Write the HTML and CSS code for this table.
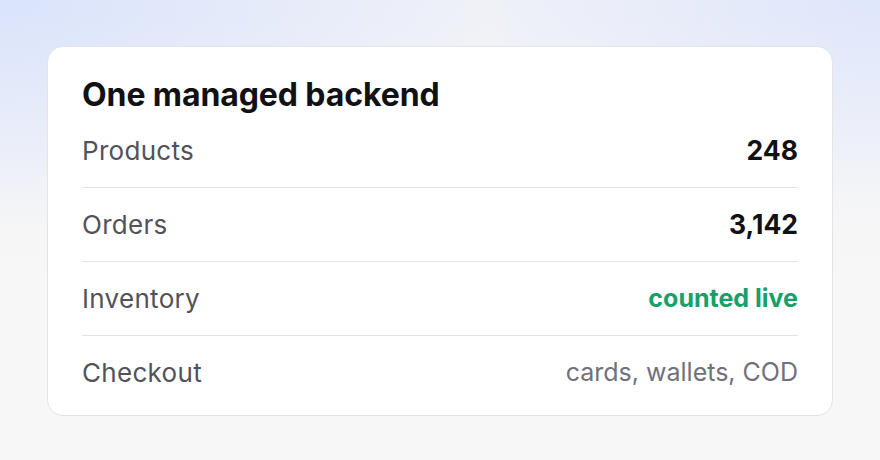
FILE: index.html
```html
<!DOCTYPE html>
<html lang="en">
<head>
<meta charset="utf-8">
<title>One managed backend</title>
<link rel="stylesheet" href="styles.css">
</head>
<body>
<main class="stage">
  <section class="card">
    <h2 class="card-title">One managed backend</h2>
    <ul class="stats">
      <li class="stat"><span class="stat-label">Products</span><span class="stat-value stat-num">248</span></li>
      <li class="stat"><span class="stat-label">Orders</span><span class="stat-value stat-num">3,142</span></li>
      <li class="stat"><span class="stat-label">Inventory</span><span class="stat-value stat-live">counted live</span></li>
      <li class="stat"><span class="stat-label">Checkout</span><span class="stat-value stat-muted">cards, wallets, COD</span></li>
    </ul>
  </section>
</main>
</body>
</html>
```

FILE: styles.css
```css
* { box-sizing: border-box; }
html, body { margin: 0; height: 100%; }
body {
  font-family: Inter, "Noto Sans", sans-serif;
  background:
    radial-gradient(ellipse 55% 50% at 0% 0%, rgba(212, 224, 252, 0.8), rgba(212, 224, 252, 0) 100%),
    radial-gradient(ellipse 45% 45% at 100% 0%, rgba(216, 226, 252, 0.7), rgba(216, 226, 252, 0) 100%),
    linear-gradient(180deg, #eff1f8 0%, #f7f7f7 60%);
  background-color: #f7f7f7;
}
.stage {
  height: 100%;
  padding: 46px 47px;
}
.card {
  background: #fff;
  border: 1px solid #e4e4e7;
  border-radius: 16px;
  padding: 30px 34px 6px;
}
.card-title {
  margin: 0 0 1px;
  font-size: 32px;
  line-height: 36px;
  font-weight: 700;
  color: #111113;
  letter-spacing: -0.1px;
}
.stats { list-style: none; margin: 0; padding: 0; }
.stat {
  display: flex;
  justify-content: space-between;
  align-items: center;
  padding: 18px 0;
  line-height: 37px;
  font-size: 26px;
  border-bottom: 1px solid #e4e4e7;
}
.stat:last-child { border-bottom: none; }
.stat-label { color: #52525b; letter-spacing: 0.3px; }
.stat-value { font-weight: 700; color: #111113; font-size: 25px; }
.stat-num { font-size: 26.5px; }
.stat-live { color: #16a06a; }
.stat-muted { font-weight: 400; color: #71717a; }
```
